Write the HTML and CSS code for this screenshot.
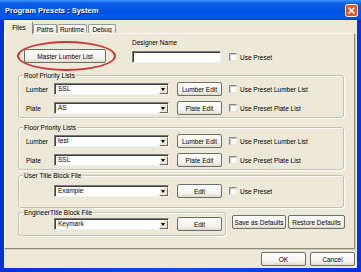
FILE: index.html
```html
<!DOCTYPE html>
<html lang="en">
  <head>
    <meta charset="UTF-8" />
    <meta name="viewport" content="width=device-width, initial-scale=1.0" />
    <title>Program Presets : System</title>
    <link rel="stylesheet" href="styles.css">
  </head>
  <body>
    <div class="window">
      <div class="titlebar">
        <span class="title">Program Presets : System</span>
        <span class="close">
          <svg width="13" height="13" viewBox="0 0 13 13">
            <rect x="0.5" y="0.5" width="12" height="12" rx="2" fill="#e2562f" stroke="#fff" />
            <path d="M4 4 L9 9 M9 4 L4 9" stroke="#fff" stroke-width="1.6" stroke-linecap="round" />
          </svg>
        </span>
      </div>

      <div class="client">
        <div class="tabs">
          <div class="tab active">Files</div>
          <div class="tab paths">Paths</div>
          <div class="tab runtime">Runtime</div>
          <div class="tab debug">Debug</div>
        </div>

        <div class="panel">
          <!-- Master list + designer -->
          <div class="top-row">
            <div class="btn master">Master Lumber List</div>
            <div class="designer">
              <div class="label">Designer Name</div>
              <div class="textbox"></div>
            </div>
            <div class="check top-check"><span class="box"></span>Use Preset</div>
          </div>

          <div class="group roof">
            <div class="group-title">Roof Priority Lists</div>
            <div class="row first">
              <span class="row-label">Lumber</span>
              <div class="combo"><span class="value">SSL</span><span class="arrow"></span></div>
              <div class="btn edit">Lumber Edit</div>
              <div class="check"><span class="box"></span>Use Preset Lumber List</div>
            </div>
            <div class="row">
              <span class="row-label">Plate</span>
              <div class="combo"><span class="value">AS</span><span class="arrow"></span></div>
              <div class="btn edit">Plate Edit</div>
              <div class="check"><span class="box"></span>Use Preset Plate List</div>
            </div>
          </div>

          <div class="group floor">
            <div class="group-title">Floor Priority Lists</div>
            <div class="row first">
              <span class="row-label">Lumber</span>
              <div class="combo"><span class="value">test</span><span class="arrow"></span></div>
              <div class="btn edit">Lumber Edit</div>
              <div class="check"><span class="box"></span>Use Preset Lumber List</div>
            </div>
            <div class="row">
              <span class="row-label">Plate</span>
              <div class="combo"><span class="value">SSL</span><span class="arrow"></span></div>
              <div class="btn edit">Plate Edit</div>
              <div class="check"><span class="box"></span>Use Preset Plate List</div>
            </div>
          </div>

          <div class="group user">
            <div class="group-title">User Title Block File</div>
            <div class="row">
              <span class="row-label"></span>
              <div class="combo"><span class="value">Example</span><span class="arrow"></span></div>
              <div class="btn edit">Edit</div>
              <div class="check"><span class="box"></span>Use Preset</div>
            </div>
          </div>

          <div class="bottom-row">
            <div class="group engineer">
              <div class="group-title">EngineerTitle Block File</div>
              <div class="row">
                <span class="row-label"></span>
                <div class="combo"><span class="value">Keymark</span><span class="arrow"></span></div>
                <div class="btn edit">Edit</div>
              </div>
            </div>
            <div class="btn save">Save as Defaults</div>
            <div class="btn restore">Restore Defaults</div>
          </div>
        </div>

        <div class="footer">
          <div class="btn ok">OK</div>
          <div class="btn cancel">Cancel</div>
        </div>
      </div>

      <!-- red highlight drawn over the screenshot -->
      <div class="annotation"></div>
    </div>
  </body>
</html>
```

FILE: styles.css
```css
body {
  margin: 0;
  font-family: "Liberation Sans", Arial, sans-serif;
  font-size: 6.5px;
  color: #000;
  background-color: #fff;
}

.window {
  position: relative;
  width: 361px;
  height: 272px;
  display: flex;
  flex-direction: column;
  background: linear-gradient(to right, #0831d9, #0a4fe0 50%, #0831d9);
  overflow: hidden;
}

.titlebar {
  height: 20px;
  flex: none;
  display: flex;
  align-items: center;
  justify-content: space-between;
  padding: 0 3px 0 5px;
  background: linear-gradient(to bottom, #3d95ff 0%, #0a5ee8 18%, #0054e3 55%, #0058ee 85%, #0040d0 100%);
}

.title {
  color: #fff;
  font-size: 7.5px;
  font-weight: bold;
  text-shadow: 1px 1px 0 #0a1e7a;
}

.close {
  display: flex;
  margin-top: 1px;
}

.client {
  flex: 1;
  margin: 0 4px 4px 4px;
  background-color: #ece9d8;
  display: flex;
  flex-direction: column;
}

/* Tabs */
.tabs {
  display: flex;
  align-items: flex-end;
  height: 13px;
  margin-top: 1px;
  padding-left: 1px;
}

.tab {
  height: 10px;
  line-height: 10px;
  text-align: center;
  border: 1px solid #919b9c;
  border-bottom: none;
  border-radius: 2px 2px 0 0;
  background: linear-gradient(to bottom, #fbfaf6, #ece9d8);
  box-sizing: border-box;
}

.tab.active {
  position: relative;
  z-index: 1;
  width: 28px;
  height: 13px;
  line-height: 11px;
  background: #ece9d8;
  border-color: #fff #8a8a80 transparent #fff;
}

.tab.paths {
  width: 24px;
}

.tab.runtime {
  width: 30px;
}

.tab.debug {
  width: 28px;
  margin-left: 1px;
}

.panel {
  box-sizing: border-box;
  width: 351px;
  height: 216px;
  margin-top: -1px;
  padding: 5px 0 0 13px;
  border: 1px solid;
  border-color: #fff #8a8a80 #8a8a80 #fff;
  box-shadow: 1px 1px 0 #d0cdbc;
}

/* Controls */
.btn {
  box-sizing: border-box;
  height: 14px;
  display: flex;
  align-items: center;
  justify-content: center;
  border: 1px solid #6f6f68;
  border-radius: 2px;
  background: linear-gradient(to bottom, #ffffff, #f4f3ee 70%, #dedbcb);
  white-space: nowrap;
}

.check {
  display: flex;
  align-items: center;
  white-space: nowrap;
}

.box {
  box-sizing: border-box;
  width: 8px;
  height: 8px;
  margin-right: 3px;
  background-color: #fff;
  border: 1px solid;
  border-color: #8a8a8a #e4e4e4 #e4e4e4 #8a8a8a;
  box-shadow: inset 1px 1px 0 #c8c8c8;
}

.combo {
  box-sizing: border-box;
  width: 115px;
  height: 12px;
  display: flex;
  align-items: center;
  justify-content: space-between;
  background-color: #fff;
  border: 1px solid;
  border-color: #7a7a7a #f2f2f2 #f2f2f2 #7a7a7a;
  box-shadow: inset 1px 1px 0 #404040;
}

.combo .value {
  padding-left: 3px;
  line-height: 10px;
}

.combo .arrow {
  box-sizing: border-box;
  width: 9px;
  height: 9px;
  margin: 1px 0 0 0;
  background-color: #ece9d8;
  border: 1px solid;
  border-color: #fff #6a6a6a #6a6a6a #fff;
  position: relative;
}

.combo .arrow::after {
  content: "";
  position: absolute;
  left: 1px;
  top: 2px;
  border-left: 2.5px solid transparent;
  border-right: 2.5px solid transparent;
  border-top: 3px solid #000;
}

/* Top row */
.top-row {
  display: flex;
  align-items: flex-end;
  height: 24px;
}

.master {
  width: 82px;
  margin-left: 6px;
}

.designer {
  margin-left: 26px;
}

.label {
  line-height: 8px;
}

.textbox {
  box-sizing: border-box;
  width: 89px;
  height: 12px;
  margin-top: 4px;
  background-color: #fff;
  border: 1px solid;
  border-color: #7a7a7a #f2f2f2 #f2f2f2 #7a7a7a;
  box-shadow: inset 1px 1px 0 #404040;
}

.top-check {
  margin-left: 8px;
  margin-bottom: 2px;
}

/* Group boxes */
.group {
  box-sizing: border-box;
  width: 326px;
  border: 1px solid #c4c1b0;
  border-radius: 3px;
  box-shadow: inset 1px 1px 0 #fff, 1px 1px 0 #fff;
}

.group-title {
  width: max-content;
  margin: -5px 0 0 4px;
  padding: 0 1px;
  line-height: 9px;
  background-color: #ece9d8;
}

.row {
  display: flex;
  align-items: center;
  height: 14px;
  padding-left: 7px;
  margin-top: 5px;
}

.row.first {
  margin-top: 2px;
}

.row-label {
  width: 28px;
}

.edit {
  width: 45px;
  margin-left: 8px;
}

.row .check {
  margin-left: 7px;
}

.roof {
  height: 43px;
  margin-top: 12px;
}

.floor {
  height: 43px;
  margin-top: 9px;
}

.user {
  height: 33px;
  margin-top: 5px;
}

.user .row {
  margin-top: 4px;
}

.bottom-row {
  display: flex;
  align-items: flex-start;
  margin-top: 4px;
}

.engineer {
  width: 208px;
  height: 24px;
}

.engineer .row {
  margin-top: 0;
}

.save {
  width: 54px;
  margin: 3px 0 0 6px;
}

.restore {
  width: 57px;
  margin: 3px 0 0 2px;
}

/* Dialog buttons */
.footer {
  display: flex;
  justify-content: flex-end;
  gap: 4px;
  margin-top: 3px;
  padding-right: 2px;
}

.ok,
.cancel {
  width: 45px;
}

.annotation {
  position: absolute;
  left: 17px;
  top: 41px;
  width: 99px;
  height: 30px;
  box-sizing: border-box;
  border: 2px solid #c8383a;
  border-radius: 50%;
}
```
